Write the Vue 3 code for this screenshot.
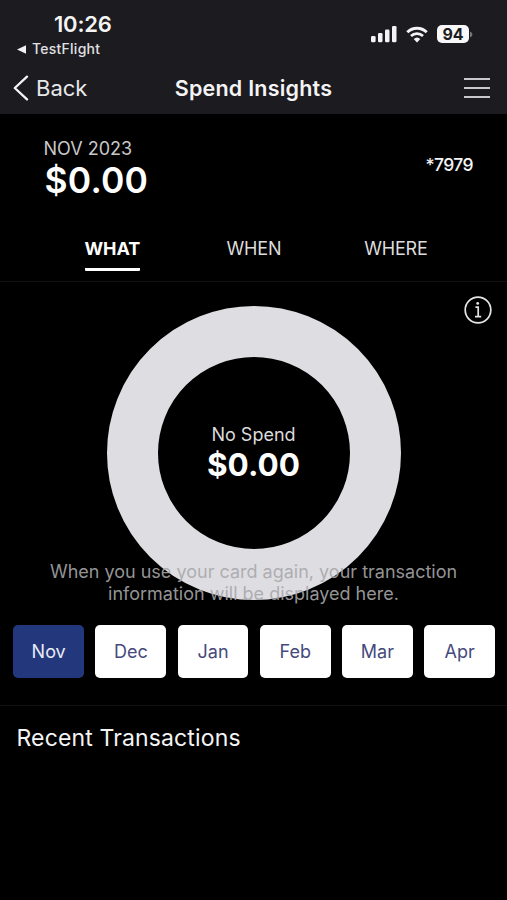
<script setup>
import { ref } from 'vue'

const tabs = ['WHAT', 'WHEN', 'WHERE']
const months = ['Nov', 'Dec', 'Jan', 'Feb', 'Mar', 'Apr']
const activeTab = ref('WHAT')
const activeMonth = ref('Nov')
</script>

<template>
  <div class="screen">
    <header class="top">
      <div class="status">
        <div class="status-left">
          <div class="clock">10:26</div>
          <div class="return">
            <svg width="9" height="9" viewBox="0 0 9 9"><path d="M0 4.5 9 0.3V8.7Z" fill="#f2f2f4" /></svg>
            <span>TestFlight</span>
          </div>
        </div>
        <div class="status-right">
          <svg width="27" height="18" viewBox="0 0 27 18" fill="#f4f4f6">
            <rect x="0" y="11" width="4.6" height="6.2" rx="1.3" />
            <rect x="7" y="8" width="4.5" height="9.2" rx="1.3" />
            <rect x="14" y="4.6" width="4.5" height="12.6" rx="1.3" />
            <rect x="21" y="1" width="4.5" height="16.2" rx="1.3" />
          </svg>
          <svg class="wifi" width="22" height="17" viewBox="0 0 22 17" fill="none" stroke="#f4f4f6">
            <path d="M1.3 6.2A13.8 13.8 0 0 1 20.7 6.2" stroke-width="2.9" />
            <path d="M5 10A8.6 8.6 0 0 1 17 10" stroke-width="2.8" />
            <path d="M11 16.6 7.7 13.1A4.8 4.8 0 0 1 14.3 13.1Z" fill="#f4f4f6" stroke="none" />
          </svg>
          <div class="battery">94</div>
          <svg class="nub" width="3" height="7" viewBox="0 0 3 7"><path d="M0 0.5Q2.4 1.4 2.4 3.5T0 6.5Z" fill="#77777b" /></svg>
        </div>
      </div>
      <nav class="nav">
        <button class="back">
          <svg width="16" height="26" viewBox="0 0 16 26" fill="none" stroke="#f4f4f6" stroke-width="2.3" stroke-linecap="round" stroke-linejoin="round">
            <path d="M14 1.6 1.8 13 14 24.4" />
          </svg>
          <span>Back</span>
        </button>
        <h1 class="title">Spend Insights</h1>
        <button class="menu" aria-label="Menu"><i></i><i></i><i></i></button>
      </nav>
    </header>

    <section class="summary">
      <div>
        <div class="period">NOV 2023</div>
        <div class="total">$0.00</div>
      </div>
      <div class="card-no">*7979</div>
    </section>

    <div class="tabs">
      <button v-for="t in tabs" :key="t" class="tab" :class="[t.toLowerCase(), { active: t === activeTab }]" @click="activeTab = t">{{ t }}</button>
    </div>

    <section class="chart">
      <svg class="info" width="28" height="28" viewBox="0 0 28 28" fill="none" stroke="#e4e4e4">
        <circle cx="14" cy="14" r="12.8" stroke-width="1.7" />
        <path d="M11.4 11.2H14.2V20.6M11 20.6H17.2" stroke-width="1.7" />
        <circle cx="13.7" cy="7.4" r="1.4" fill="#e4e4e4" stroke="none" />
      </svg>
      <div class="ring">
        <div class="ring-label">No Spend</div>
        <div class="ring-value">$0.00</div>
      </div>
      <p class="hint">When you use your card again, your transaction<br>information will be displayed here.</p>
    </section>

    <div class="months">
      <button v-for="m in months" :key="m" class="month" :class="{ active: m === activeMonth }" @click="activeMonth = m">{{ m }}</button>
    </div>

    <h2 class="recent">Recent Transactions</h2>
  </div>
</template>

<style>
body {
  background: #000;
}
</style>

<style scoped>
.screen {
  width: 507px;
  height: 900px;
  overflow: hidden;
  background: #000;
  color: #f4f4f4;
  font-family: Inter, "Liberation Sans", sans-serif;
}
button {
  border: 0;
  padding: 0;
  background: none;
  color: inherit;
  font: inherit;
}
h1, h2, p {
  margin: 0;
}
.top {
  height: 114px;
  background: #1c1b20;
}
.status {
  display: flex;
  justify-content: space-between;
  height: 62px;
}
.clock {
  padding: 12px 0 0 54px;
  font-size: 22px;
  line-height: 25px;
  font-weight: 600;
  letter-spacing: -0.2px;
}
.return {
  display: flex;
  align-items: center;
  gap: 6px;
  padding-left: 17px;
  font-size: 14px;
  line-height: 24px;
  font-weight: 500;
  letter-spacing: 0.25px;
  color: #e0e0e2;
}
.status-right {
  display: flex;
  align-items: center;
  height: 20px;
  padding: 24px 34px 0 0;
}
.wifi {
  margin: 0 9px 0 8px;
}
.battery {
  width: 32px;
  height: 18px;
  border-radius: 5px;
  background: #f8f8fa;
  color: #1c1b20;
  font-size: 16px;
  line-height: 18px;
  font-weight: 700;
  text-align: center;
}
.nub {
  margin-left: 1px;
}
.nav {
  display: grid;
  grid-template-columns: 1fr auto 1fr;
  align-items: center;
  height: 52px;
  padding: 0 17px 0 13px;
}
.back {
  display: flex;
  align-items: center;
  gap: 7px;
  font-size: 22px;
  line-height: 26px;
  color: #e8e8ea;
}
.title {
  padding-left: 4px;
  font-size: 21.5px;
  line-height: 26px;
  font-weight: 600;
  letter-spacing: 0.22px;
}
.menu {
  justify-self: end;
  display: flex;
  flex-direction: column;
  gap: 7px;
  width: 26px;
}
.menu i {
  height: 2px;
  background: #c9c9cc;
}
.summary {
  display: flex;
  justify-content: space-between;
  height: 108px;
  padding: 25px 34px 0 43.5px;
  box-sizing: border-box;
}
.period {
  font-size: 18px;
  line-height: 20px;
  color: #c8c8c8;
}
.total {
  padding-left: 1px;
  font-size: 35.5px;
  line-height: 43px;
  font-weight: 600;
  letter-spacing: 0.2px;
  color: #fff;
}
.card-no {
  padding-top: 16px;
  font-size: 17.5px;
  line-height: 20px;
  font-weight: 500;
  letter-spacing: -0.6px;
}
.tabs {
  display: flex;
  height: 59px;
  padding-left: 84.5px;
  border-bottom: 1px solid #131313;
}
.tab {
  display: flex;
  height: 49px;
  padding-top: 17px;
  box-sizing: border-box;
  border-bottom: 3px solid transparent;
  border-radius: 1px;
  font-size: 18px;
  line-height: 20px;
  letter-spacing: -0.2px;
  color: #dcdcdc;
  margin-right: 84px;
}
.tab.when {
  margin-left: 2.5px;
  margin-right: 83px;
}
.tab.active {
  border-bottom-color: #fff;
  color: #fff;
  font-weight: 700;
  letter-spacing: -0.1px;
}
.chart {
  position: relative;
  display: flex;
  justify-content: center;
  height: 343px;
}
.info {
  position: absolute;
  top: 14px;
  right: 15px;
}
.ring {
  width: 294px;
  height: 294px;
  margin-top: 24px;
  box-sizing: border-box;
  border: 51px solid #dedde2;
  border-radius: 50%;
  padding-top: 66px;
  text-align: center;
}
.ring-label {
  font-size: 18px;
  line-height: 24px;
  color: #dcdcdc;
}
.ring-value {
  font-size: 31.5px;
  line-height: 36px;
  font-weight: 650;
  color: #fff;
}
.hint {
  position: absolute;
  left: 0;
  right: 0;
  top: 279px;
  text-align: center;
  font-size: 18px;
  line-height: 21.5px;
  color: rgba(168, 168, 170, 0.9);
}
.months {
  display: grid;
  grid-template-columns: repeat(6, 1fr);
  gap: 11.5px;
  height: 81px;
  padding: 0 12px 0 13.3px;
  box-sizing: border-box;
  align-items: start;
  border-bottom: 1px solid #131313;
}
.month {
  height: 53px;
  border-radius: 5px;
  background: #fff;
  color: #454a7c;
  font-size: 18px;
}
.month.active {
  background: #23377d;
  color: #e8ebf6;
}
.recent {
  padding: 17px 0 0 16.5px;
  font-size: 23px;
  line-height: 30px;
  font-weight: 400;
  letter-spacing: 0.14px;
}
</style>
